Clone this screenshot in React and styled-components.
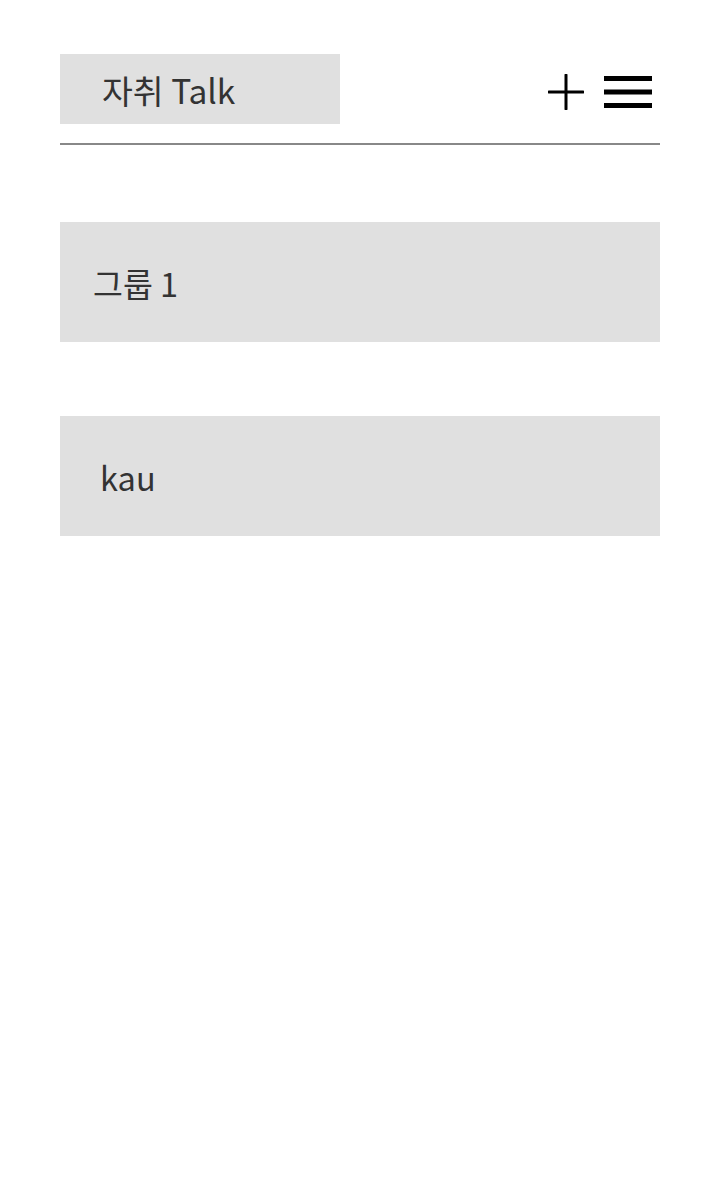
import React from 'react';
import styled, { createGlobalStyle } from 'styled-components';

const GlobalStyle = createGlobalStyle`
	body {
		margin: 0;
		background: #fff;
		font-family: "Noto Sans CJK KR", "Noto Sans", sans-serif;
		color: #333;
	}
`;

const Page = styled.div`
	width: 600px;
	padding: 54px 60px 0 60px;
`;

const TopBar = styled.header`
	display: flex;
	justify-content: space-between;
	align-items: flex-start;
	padding-bottom: 19px;
	border-bottom: 2px solid #888;
`;

const Title = styled.div`
	width: 238px;
	height: 70px;
	padding-left: 42px;
	display: flex;
	align-items: center;
	background: #e0e0e0;
	font-size: 33.5px;
`;

const Tools = styled.div`
	display: flex;
	align-items: center;
	gap: 20px;
	padding: 20px 8px 0 0;
`;

const IconButton = styled.button`
	border: 0;
	padding: 0;
	background: none;
	display: flex;
	cursor: pointer;
`;

const List = styled.div`
	display: flex;
	flex-direction: column;
	gap: 74px;
	margin-top: 77px;
`;

const Room = styled.div`
	height: 120px;
	display: flex;
	align-items: center;
	padding-left: ${props => props.indent}px;
	background: #e0e0e0;
	font-size: 32.5px;
`;

const rooms = [
	{ name: '그룹 1', indent: 33 },
	{ name: 'kau', indent: 40 },
];

function App() {
	return (
		<Page>
			<GlobalStyle />
			<TopBar>
				<Title>자취 Talk</Title>
				<Tools>
					<IconButton>
						<svg width="36" height="36" viewBox="0 0 36 36">
							<path d="M18 1v34M1 18h34" stroke="#000" strokeWidth="3" strokeLinecap="round" />
						</svg>
					</IconButton>
					<IconButton>
						<svg width="48" height="33" viewBox="0 0 48 33">
							<rect x="0" y="0" width="48" height="5" fill="#000" />
							<rect x="0" y="13.5" width="48" height="5" fill="#000" />
							<rect x="0" y="27" width="48" height="5" fill="#000" />
						</svg>
					</IconButton>
				</Tools>
			</TopBar>
			<List>
				{rooms.map(room => (
					<Room key={room.name} indent={room.indent}>{room.name}</Room>
				))}
			</List>
		</Page>
	);
}

export default App;
